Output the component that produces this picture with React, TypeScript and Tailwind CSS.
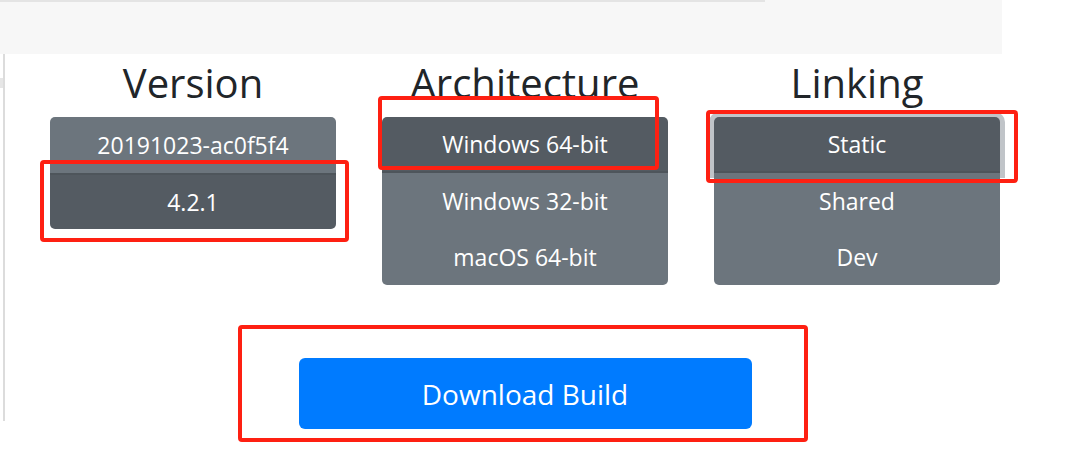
import React from "react";

type Group = {
  title: string;
  items: string[];
  active: number;
  focus?: boolean;
};

const groups: Group[] = [
  { title: "Version", items: ["20191023-ac0f5f4", "4.2.1"], active: 1 },
  {
    title: "Architecture",
    items: ["Windows 64-bit", "Windows 32-bit", "macOS 64-bit"],
    active: 0,
  },
  { title: "Linking", items: ["Static", "Shared", "Dev"], active: 0, focus: true },
];

function OptionGroup({ group }: { group: Group }) {
  return (
    <div className="flex w-[332px] flex-col items-center px-[23px]">
      <h2 className="h-[63px] pt-[5px] text-[40px] leading-[48px] text-[#212529]">
        {group.title}
      </h2>
      <div className="flex w-full flex-col">
        {group.items.map((item, i) => {
          const active = i === group.active;
          const first = i === 0;
          const last = i === group.items.length - 1;
          return (
            <div
              key={item}
              className={`relative flex h-[56px] items-center justify-center text-[23px] text-white ${
                active ? "bg-[#545b62]" : "bg-[#6c757d]"
              } ${first ? "rounded-t-[5px]" : ""} ${last ? "rounded-b-[5px]" : ""} ${
                active && !first ? "border-t-2 border-[#4e555b]" : ""
              } ${active && !last ? "border-b-2 border-[#4e555b]" : ""} ${
                group.focus && active ? "shadow-[0_0_0_5px_rgba(130,138,145,0.5)]" : ""
              }`}
            >
              {item}
            </div>
          );
        })}
      </div>
    </div>
  );
}

export default function App() {
  return (
    <div
      className="relative h-[466px] w-[1087px] overflow-hidden bg-white"
      style={{ fontFamily: '"Open Sans", "Noto Sans", sans-serif' }}
    >
      {/* top grey band */}
      <div className="relative h-[54px] w-[1002px] bg-[#f7f7f7]">
        <div className="absolute left-0 top-0 h-[2px] w-[765px] bg-[#e4e4e4]" />
      </div>

      <div className="flex">
        {/* left scroll edge */}
        <div className="relative h-[367px] w-[5px] border-r-2 border-[#dcdcdc]">
          <div className="absolute left-0 top-[24px] h-[10px] w-[3px] bg-[#e6e6e6]" />
        </div>

        <div className="flex flex-col pl-[22px]">
          <div className="flex">
            {groups.map((g) => (
              <OptionGroup key={g.title} group={g} />
            ))}
          </div>
          <div className="flex w-[996px] justify-center pt-[73px]">
            <button
              type="button"
              className="flex h-[71px] w-[453px] items-center justify-center rounded-[6px] bg-[#007bff] text-[28px] text-white"
            >
              Download Build
            </button>
          </div>
        </div>
      </div>

      {/* annotation boxes */}
      <div className="absolute left-[40px] top-[160px] h-[82px] w-[309px] rounded-[4px] border-4 border-[#fe2012]" />
      <div className="absolute left-[378px] top-[96px] h-[74px] w-[281px] rounded-[4px] border-4 border-[#fe2012]" />
      <div className="absolute left-[706px] top-[110px] h-[73px] w-[312px] rounded-[4px] border-4 border-[#fe2012]" />
      <div className="absolute left-[238px] top-[325px] h-[117px] w-[570px] rounded-[4px] border-4 border-[#fe2012]" />
    </div>
  );
}
